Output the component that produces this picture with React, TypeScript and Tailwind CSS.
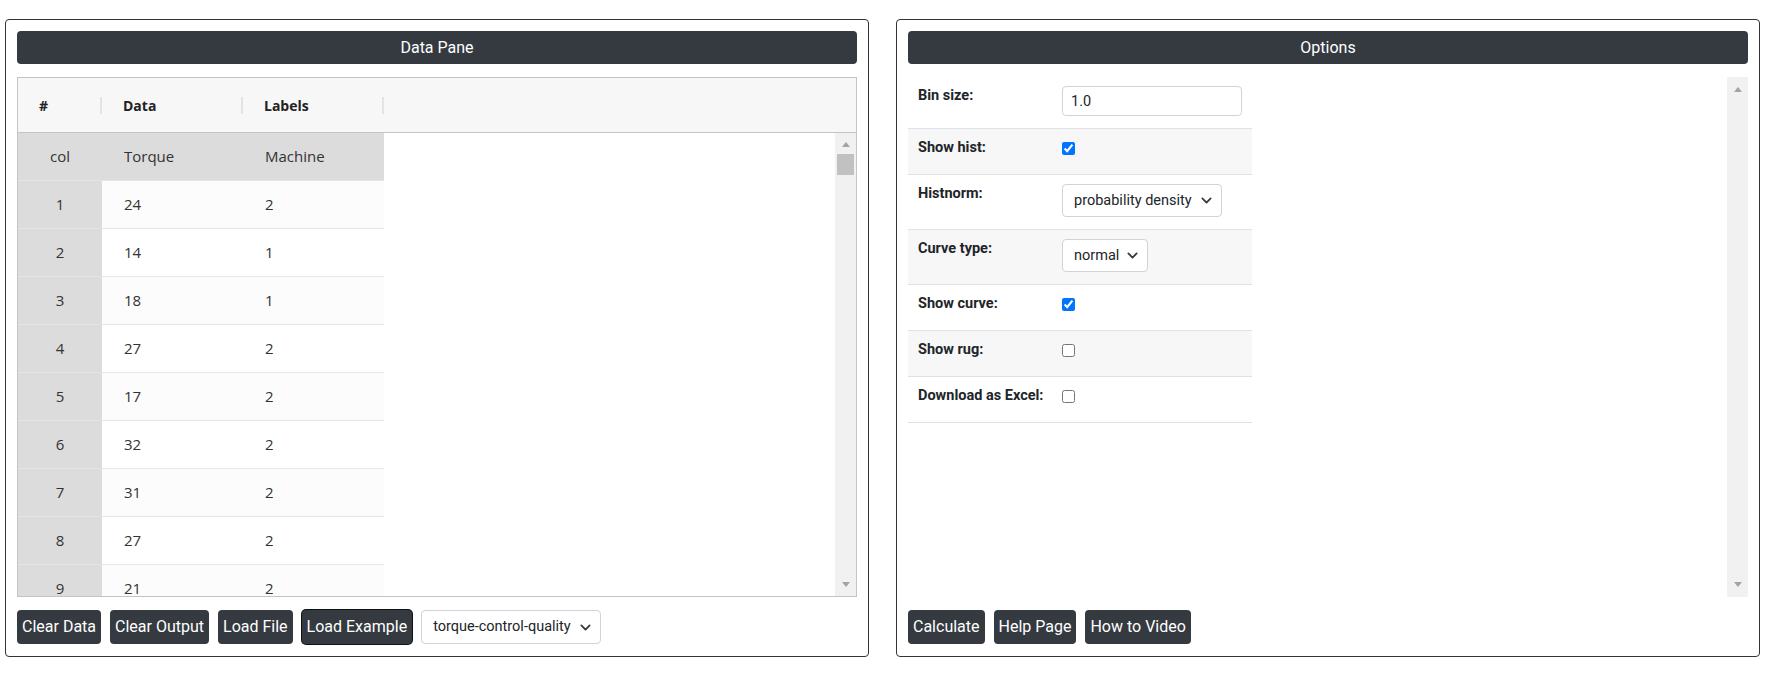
import { useState } from "react"

const rows: [number, number, number][] = [
    [1, 24, 2],
    [2, 14, 1],
    [3, 18, 1],
    [4, 27, 2],
    [5, 17, 2],
    [6, 32, 2],
    [7, 31, 2],
    [8, 27, 2],
    [9, 21, 2],
]

const Chevron = () => (
    <svg viewBox="0 0 16 16" className="w-[11px] h-[11px]" fill="none">
        <path d="M2 5l6 6 6-6" stroke="#343a40" strokeWidth="2.6" strokeLinecap="round" strokeLinejoin="round" />
    </svg>
)

const Arrow = ({ up }: { up?: boolean }) => (
    <svg viewBox="0 0 8 5" className="w-[8px] h-[5px]">
        <path d={up ? "M0 5L4 0L8 5Z" : "M0 0L8 0L4 5Z"} fill="#a3a3a3" />
    </svg>
)

const FakeSelect = ({ value, width, height }: { value: string; width: string; height: string }) => (
    <div className={`flex items-center justify-between bg-white border border-[#ced4da] rounded-[4px] pl-[11px] pr-[9px] text-[14.5px] text-[#212529] ${width} ${height}`}>
        <span>{value}</span>
        <Chevron />
    </div>
)

const Btn = ({ label, focused }: { label: string; focused?: boolean }) => (
    <button className={`h-[34px] px-[5px] bg-[#343a40] text-white text-[16px] rounded-[4px] ${focused ? "ring-1 ring-[#111]" : ""}`}>
        {label}
    </button>
)

const PaneHeader = ({ title }: { title: string }) => (
    <div className="h-[33px] bg-[#343a40] rounded-[4px] text-white text-[16px] flex items-center justify-center shrink-0">
        {title}
    </div>
)

const DataGrid = () => {
    const head = ["#", "Data", "Labels"]
    const widths = ["w-[84px]", "w-[141px]", "w-[141px]"]
    return (
        <div className="mt-[13px] h-[520px] border border-[#c4c4c4] flex flex-col" style={{ fontFamily: "'Open Sans', 'Noto Sans', sans-serif" }}>
            <div className="h-[55px] shrink-0 bg-[#f7f7f7] border-b border-[#c4c4c4] flex">
                {head.map((h, i) => (
                    <div key={h} className={`${widths[i]} relative flex items-center pl-[21px] font-bold text-[14px] text-[#222]`}>
                        {h}
                        <div className="absolute right-0 top-[19px] h-[17px] w-[2px] bg-[#e3e3e3]" />
                    </div>
                ))}
            </div>
            <div className="flex flex-1 min-h-0">
                <div className="flex-1 overflow-hidden text-[15px] text-[#333]">
                    <div className="flex h-[48px] w-[366px] bg-[#dcdcdc] border-b border-[#e4e4e4]">
                        <div className="w-[84px] flex items-center justify-center">col</div>
                        <div className="w-[141px] flex items-center pl-[22px]">Torque</div>
                        <div className="w-[141px] flex items-center pl-[22px]">Machine</div>
                    </div>
                    {rows.map(([n, d, l]) => (
                        <div key={n} className="flex h-[48px] w-[366px]">
                            <div className="w-[84px] flex items-center justify-center bg-[#dcdcdc] border-b border-[#e4e4e4]">{n}</div>
                            <div className={`w-[282px] flex border-b border-[#e6e6e6] ${n % 2 ? "bg-[#fcfcfc]" : "bg-white"}`}>
                                <div className="w-[141px] flex items-center pl-[22px]">{d}</div>
                                <div className="w-[141px] flex items-center pl-[22px]">{l}</div>
                            </div>
                        </div>
                    ))}
                </div>
                <div className="w-[21px] bg-[#f1f1f1] flex flex-col items-center">
                    <div className="mt-[9px]"><Arrow up /></div>
                    <div className="mt-[7px] w-[17px] h-[21px] bg-[#c1c1c1]" />
                    <div className="flex-1" />
                    <div className="mb-[9px]"><Arrow /></div>
                </div>
            </div>
        </div>
    )
}

type Opt = { label: string; kind: "input" | "check" | "select"; value?: string; checked?: boolean; h: string; w?: string }

const options: Opt[] = [
    { label: "Bin size:", kind: "input", value: "1.0", h: "h-[52px]" },
    { label: "Show hist:", kind: "check", checked: true, h: "h-[46px]" },
    { label: "Histnorm:", kind: "select", value: "probability density", h: "h-[55px]", w: "w-[160px]" },
    { label: "Curve type:", kind: "select", value: "normal", h: "h-[55px]", w: "w-[86px]" },
    { label: "Show curve:", kind: "check", checked: true, h: "h-[46px]" },
    { label: "Show rug:", kind: "check", h: "h-[46px]" },
    { label: "Download as Excel:", kind: "check", h: "h-[46px]" },
]

const OptionsTable = () => {
    const [binSize, setBinSize] = useState("1.0")
    return (
        <div className="w-[344px]">
            {options.map((o, i) => (
                <div key={o.label} className={`flex border-b border-[#dee2e6] ${o.h} ${i % 2 ? "bg-[#f7f7f7]" : "bg-white"}`}>
                    <div className="w-[154px] pl-[10px] pt-[11px] font-bold text-[14.5px] leading-[16px] text-[#212529]">{o.label}</div>
                    <div className="flex-1">
                        {o.kind === "input" && (
                            <input
                                value={binSize}
                                onChange={e => setBinSize(e.target.value)}
                                className="mt-[9px] w-[180px] h-[30px] border border-[#ced4da] rounded-[4px] px-[8px] text-[14.5px] text-[#212529] outline-none"
                            />
                        )}
                        {o.kind === "check" && (
                            <input type="checkbox" defaultChecked={o.checked} className="mt-[13px] m-0 w-[13px] h-[13px] block" />
                        )}
                        {o.kind === "select" && (
                            <div className="mt-[9px]">
                                <FakeSelect value={o.value ?? ""} width={o.w ?? ""} height="h-[33px]" />
                            </div>
                        )}
                    </div>
                </div>
            ))}
        </div>
    )
}

const App = () => {
    return (
        <div className="min-h-screen bg-white flex gap-[27px] pl-[5px] pt-[19px]" style={{ fontFamily: "Roboto, 'Liberation Sans', sans-serif" }}>
            <section className="w-[864px] h-[638px] border border-[#333] rounded-[4px] p-[11px] flex flex-col">
                <PaneHeader title="Data Pane" />
                <DataGrid />
                <div className="mt-[13px] flex gap-[9px]">
                    <Btn label="Clear Data" />
                    <Btn label="Clear Output" />
                    <Btn label="Load File" />
                    <Btn label="Load Example" focused />
                    <FakeSelect value="torque-control-quality" width="w-[180px]" height="h-[34px]" />
                </div>
            </section>
            <section className="w-[864px] h-[638px] border border-[#333] rounded-[4px] p-[11px] flex flex-col">
                <PaneHeader title="Options" />
                <div className="mt-[13px] h-[520px] flex">
                    <div className="flex-1 overflow-hidden">
                        <OptionsTable />
                    </div>
                    <div className="w-[21px] bg-[#f1f1f1] flex flex-col items-center justify-between py-[10px]">
                        <Arrow up />
                        <Arrow />
                    </div>
                </div>
                <div className="mt-[13px] flex gap-[9px]">
                    <Btn label="Calculate" />
                    <Btn label="Help Page" />
                    <Btn label="How to Video" />
                </div>
            </section>
        </div>
    )
}

export default App
